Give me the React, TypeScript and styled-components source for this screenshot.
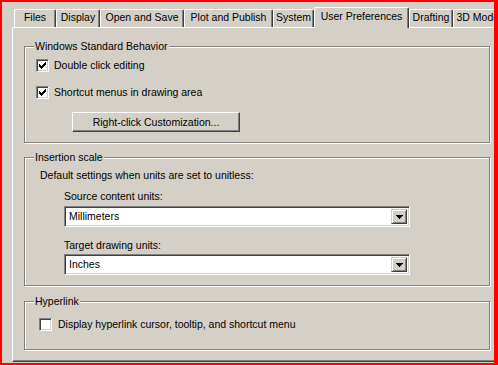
import styled, { createGlobalStyle } from "styled-components"

const GlobalStyle = createGlobalStyle`
  html, body {
    margin: 0;
    padding: 0;
    background: #d4d0c8;
  }
  body {
    font-family: "Liberation Sans", Arial, sans-serif;
    font-size: 10.5px;
    color: #000;
  }
`

const Frame = styled.div`
  width: 498px;
  height: 365px;
  box-sizing: border-box;
  border: 2px solid #ff0000;
  border-right-width: 4px;
  background: #d4d0c8;
  overflow: hidden;
  padding: 5px 0 1px 10px;
  display: flex;
  flex-direction: column;
`

const TabStrip = styled.div`
  display: flex;
  align-items: flex-end;
  height: 20px;
  padding-left: 2px;
  flex-shrink: 0;
`

const Tab = styled.div<{ $active?: boolean; $w: number }>`
  position: relative;
  z-index: ${(p) => (p.$active ? 1 : 0)};
  flex-shrink: 0;
  box-sizing: border-box;
  width: ${(p) => p.$w}px;
  height: ${(p) => (p.$active ? 21 : 18)}px;
  margin-bottom: ${(p) => (p.$active ? -1 : 0)}px;
  padding-top: ${(p) => (p.$active ? 2 : 1)}px;
  background: #d4d0c8;
  border-top: 1px solid #fff;
  border-left: 1px solid #fff;
  border-right: 1px solid #404040;
  box-shadow: inset -1px 0 0 #808080;
  border-radius: 2px 2px 0 0;
  line-height: 13px;
  text-align: center;
  white-space: nowrap;
  overflow: hidden;
`

const Panel = styled.div`
  flex: 1;
  width: 490px;
  box-sizing: border-box;
  border-top: 1px solid #fff;
  border-left: 1px solid #fff;
  border-right: 1px solid #404040;
  border-bottom: 1px solid #404040;
  box-shadow: inset -1px -1px 0 #808080;
  padding: 18px 0 0 11px;
  display: flex;
  flex-direction: column;
`

const Group = styled.div<{ $top?: number; $pad: number; $bottom: number }>`
  width: 466px;
  box-sizing: border-box;
  margin-top: ${(p) => p.$top ?? 0}px;
  border: 1px solid #808080;
  box-shadow: inset 1px 1px 0 #fff, 1px 1px 0 #fff;
  padding: 0 0 ${(p) => p.$bottom}px ${(p) => p.$pad}px;
  display: flex;
  flex-direction: column;
  align-items: flex-start;
`

const GroupTitle = styled.div<{ $shift: number }>`
  margin: -7px 0 0 ${(p) => p.$shift}px;
  padding: 0 1px;
  background: #d4d0c8;
  line-height: 13px;
  white-space: nowrap;
`

const CheckRow = styled.label<{ $top: number; $gap: number }>`
  display: flex;
  align-items: center;
  gap: ${(p) => p.$gap}px;
  height: 14px;
  margin-top: ${(p) => p.$top}px;
  line-height: 13px;
  white-space: nowrap;
`

const CheckBox = styled.span`
  width: 13px;
  height: 13px;
  box-sizing: border-box;
  flex-shrink: 0;
  background: #fff;
  border-top: 1px solid #808080;
  border-left: 1px solid #808080;
  border-right: 1px solid #fff;
  border-bottom: 1px solid #fff;
  box-shadow: inset 1px 1px 0 #404040, inset -1px -1px 0 #d4d0c8;
  display: flex;
  align-items: center;
  justify-content: center;
`

const PushButton = styled.button`
  margin: 13px 0 0 36px;
  width: 168px;
  height: 20px;
  box-sizing: border-box;
  padding: 0;
  font: inherit;
  color: #000;
  background: #d4d0c8;
  border-top: 1px solid #fff;
  border-left: 1px solid #fff;
  border-right: 1px solid #404040;
  border-bottom: 1px solid #404040;
  box-shadow: inset -1px -1px 0 #808080;
  border-radius: 0;
`

const Line = styled.div<{ $top: number; $left: number }>`
  margin: ${(p) => p.$top}px 0 0 ${(p) => p.$left}px;
  line-height: 13px;
  white-space: nowrap;
`

const Combo = styled.div<{ $top: number }>`
  margin: ${(p) => p.$top}px 0 0 24px;
  width: 346px;
  height: 21px;
  box-sizing: border-box;
  background: #fff;
  border-top: 1px solid #808080;
  border-left: 1px solid #808080;
  border-right: 1px solid #fff;
  border-bottom: 1px solid #fff;
  box-shadow: inset 1px 1px 0 #404040, inset -1px -1px 0 #d4d0c8;
  padding: 2px;
  display: flex;
  align-items: stretch;
`

const ComboValue = styled.div`
  flex: 1;
  padding-left: 2px;
  line-height: 15px;
`

const DropButton = styled.div`
  width: 16px;
  box-sizing: border-box;
  background: #d4d0c8;
  border-top: 1px solid #d4d0c8;
  border-left: 1px solid #d4d0c8;
  border-right: 1px solid #404040;
  border-bottom: 1px solid #404040;
  box-shadow: inset 1px 1px 0 #fff, inset -1px -1px 0 #808080;
  display: flex;
  align-items: center;
  justify-content: center;
`

function Check({ on }: { on?: boolean }) {
  return (
    <CheckBox>
      {on && (
        <svg width="7" height="7" viewBox="0 0 7 7" shapeRendering="crispEdges">
          <polygon points="0,2 2,4 7,-1 7,2 2,7 0,5" fill="#000" />
        </svg>
      )}
    </CheckBox>
  )
}

function Arrow() {
  return (
    <svg width="7" height="4" viewBox="0 0 7 4" shapeRendering="crispEdges">
      <polygon points="0,0 7,0 3.5,4" fill="#000" />
    </svg>
  )
}

const tabs = [
  { label: "Files", w: 42 },
  { label: "Display", w: 44 },
  { label: "Open and Save", w: 84 },
  { label: "Plot and Publish", w: 89 },
  { label: "System", w: 41 },
  { label: "User Preferences", w: 95, active: true },
  { label: "Drafting", w: 44 },
  { label: "3D Modeling", w: 66 },
]

export default function App() {
  return (
    <>
      <GlobalStyle />
      <Frame>
        <TabStrip>
          {tabs.map((t) => (
            <Tab key={t.label} $w={t.w} $active={t.active}>
              {t.label}
            </Tab>
          ))}
        </TabStrip>
        <Panel>
          <Group $pad={11} $bottom={10}>
            <GroupTitle $shift={-2}>Windows Standard Behavior</GroupTitle>
            <CheckRow $top={5} $gap={5}>
              <Check on />
              Double click editing
            </CheckRow>
            <CheckRow $top={13} $gap={5}>
              <Check on />
              Shortcut menus in drawing area
            </CheckRow>
            <PushButton>Right-click Customization...</PushButton>
          </Group>

          <Group $top={14} $pad={15} $bottom={10}>
            <GroupTitle $shift={-6}>Insertion scale</GroupTitle>
            <Line $top={5} $left={0}>Default settings when units are set to unitless:</Line>
            <Line $top={8} $left={24}>Source content units:</Line>
            <Combo $top={3}>
              <ComboValue>Millimeters</ComboValue>
              <DropButton>
                <Arrow />
              </DropButton>
            </Combo>
            <Line $top={12} $left={24}>Target drawing units:</Line>
            <Combo $top={2}>
              <ComboValue>Inches</ComboValue>
              <DropButton>
                <Arrow />
              </DropButton>
            </Combo>
          </Group>

          <Group $top={15} $pad={14} $bottom={18}>
            <GroupTitle $shift={-5}>Hyperlink</GroupTitle>
            <CheckRow $top={9} $gap={6}>
              <Check />
              Display hyperlink cursor, tooltip, and shortcut menu
            </CheckRow>
          </Group>
        </Panel>
      </Frame>
    </>
  )
}
